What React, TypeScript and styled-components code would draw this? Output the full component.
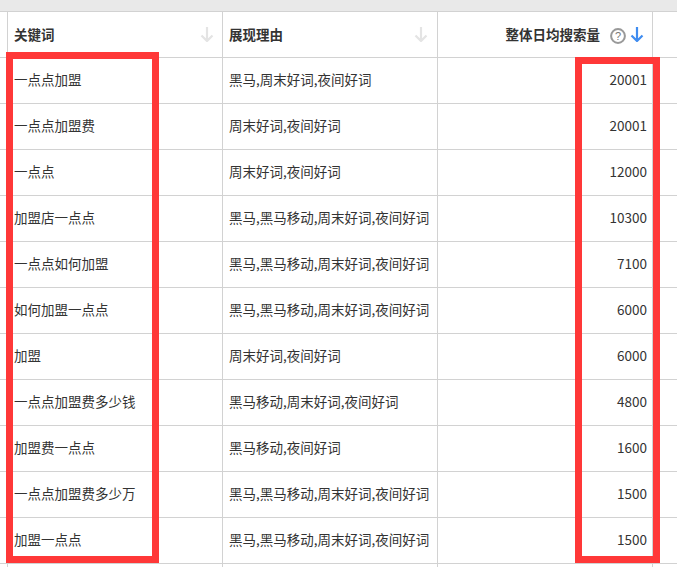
import React from "react";
import styled, { createGlobalStyle } from "styled-components";

const Global = createGlobalStyle`
  html, body { margin: 0; padding: 0; background: #fff; }
  body { width: 677px; height: 567px; overflow: hidden; font-family: "Noto Sans CJK SC", "Liberation Sans", sans-serif; }
`;

const Page = styled.div`
  position: relative;
  width: 677px;
  height: 567px;
  overflow: hidden;
`;

const TopBar = styled.div`
  height: 11px;
  background: #e9e9e9;
  border-bottom: 1px solid #d2d2d2;
`;

const Row = styled.div`
  display: grid;
  grid-template-columns: 8px 215px 215px 215px 24px;
  height: 46px;
  box-sizing: border-box;
  border-bottom: 1px solid #d2d2d2;
`;

const Filler = styled(Row)`
  height: 4px;
  border-bottom: none;
`;

const Gutter = styled.div`
  border-right: 1px solid #d2d2d2;
`;

const Cell = styled.div<{ $right?: boolean; $header?: boolean }>`
  display: flex;
  align-items: center;
  justify-content: ${(p) => (p.$right ? "flex-end" : "flex-start")};
  box-sizing: border-box;
  border-right: 1px solid #d2d2d2;
  padding: 0 ${(p) => (p.$right ? 5 : 6)}px ${(p) => (p.$header ? 1 : 3)}px 6px;
  font-size: 13.5px;
  font-weight: ${(p) => (p.$header ? 700 : 400)};
  color: #333;
  white-space: nowrap;
`;

const Label = styled.span`
  flex: 1;
`;

const RightLabel = styled.span`
  margin-right: 10px;
`;

const Sort = styled.svg<{ $gap: number }>`
  display: block;
  flex: none;
  width: 14px;
  height: 16px;
  margin-right: ${(p) => p.$gap}px;
`;

const Help = styled.svg`
  display: block;
  flex: none;
  width: 16px;
  height: 16px;
  margin-right: 4px;
  margin-bottom: -4px;
`;

const RedBox = styled.div<{ $x: number; $y: number; $w: number; $h: number }>`
  position: absolute;
  left: ${(p) => p.$x}px;
  top: ${(p) => p.$y}px;
  width: ${(p) => p.$w}px;
  height: ${(p) => p.$h}px;
  box-sizing: border-box;
  border: 7px solid #ff3838;
`;

const rows: [string, string, string][] = [
  ["一点点加盟", "黑马,周末好词,夜间好词", "20001"],
  ["一点点加盟费", "周末好词,夜间好词", "20001"],
  ["一点点", "周末好词,夜间好词", "12000"],
  ["加盟店一点点", "黑马,黑马移动,周末好词,夜间好词", "10300"],
  ["一点点如何加盟", "黑马,黑马移动,周末好词,夜间好词", "7100"],
  ["如何加盟一点点", "黑马,黑马移动,周末好词,夜间好词", "6000"],
  ["加盟", "周末好词,夜间好词", "6000"],
  ["一点点加盟费多少钱", "黑马移动,周末好词,夜间好词", "4800"],
  ["加盟费一点点", "黑马移动,夜间好词", "1600"],
  ["一点点加盟费多少万", "黑马,黑马移动,周末好词,夜间好词", "1500"],
  ["加盟一点点", "黑马,黑马移动,周末好词,夜间好词", "1500"],
];

const Arrow = ({ color, gap }: { color: string; gap: number }) => (
  <Sort $gap={gap} viewBox="0 0 14 16" fill="none" stroke={color} strokeWidth="2.2">
    <path d="M7 1v14M1.5 9.5l5.5 5.5 5.5-5.5" />
  </Sort>
);

export default function App() {
  return (
    <Page>
      <Global />
      <TopBar />
      <Row>
        <Gutter />
        <Cell $header>
          <Label>关键词</Label>
          <Arrow color="#e4e4e4" gap={2} />
        </Cell>
        <Cell $header>
          <Label>展现理由</Label>
          <Arrow color="#e4e4e4" gap={3} />
        </Cell>
        <Cell $header $right>
          <RightLabel>整体日均搜索量</RightLabel>
          <Help viewBox="0 0 16 16">
            <circle cx="8" cy="8" r="6.9" fill="none" stroke="#999" strokeWidth="2" />
            <text x="8" y="12" textAnchor="middle" fontSize="11" fontWeight="400" fill="#777" fontFamily="Liberation Sans, sans-serif">?</text>
          </Help>
          <Arrow color="#3f8cf0" gap={3} />
        </Cell>
        <div />
      </Row>
      {rows.map((r, i) => (
        <Row key={i}>
          <Gutter />
          <Cell>{r[0]}</Cell>
          <Cell>{r[1]}</Cell>
          <Cell $right>{r[2]}</Cell>
          <div />
        </Row>
      ))}
      <Filler>
        <Gutter />
        <Cell />
        <Cell />
        <Cell />
        <div />
      </Filler>
      <RedBox $x={6} $y={52} $w={153} $h={511} />
      <RedBox $x={575} $y={57} $w={85} $h={506} />
    </Page>
  );
}
